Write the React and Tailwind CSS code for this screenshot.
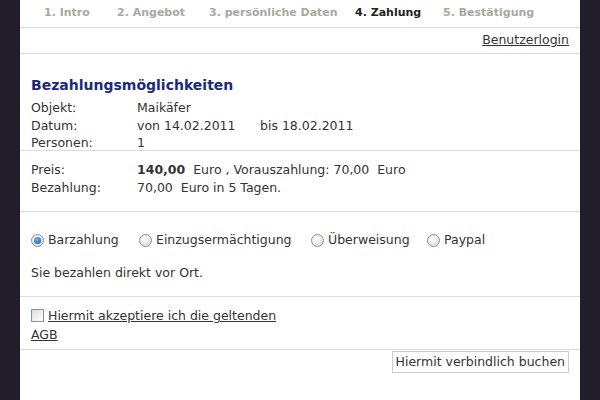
function Radio({ checked, label }) {
  return (
    <label className="flex items-center gap-[4px]">
      <span className="w-[13px] h-[13px] rounded-full border border-[#8f8f8f] bg-[radial-gradient(circle_at_40%_35%,#ffffff,#d4d4d4)] flex items-center justify-center">
        {checked && <span className="w-[7px] h-[7px] rounded-full bg-[radial-gradient(circle_at_40%_35%,#6fb8f0,#0a4f9c)]" />}
      </span>
      <span>{label}</span>
    </label>
  );
}

export default function App() {
  const tabs = [
    { label: '1. Intro', x: 'w-[73px]' },
    { label: '2. Angebot', x: 'w-[92px]' },
    { label: '3. persönliche Daten', x: 'w-[146px]' },
    { label: '4. Zahlung', x: 'w-[88px]', active: true },
    { label: '5. Bestätigung', x: 'w-[110px]' },
  ];

  return (
    <div className="w-[600px] h-[400px] bg-[#221e29] flex overflow-hidden font-['DejaVu_Sans',Verdana,sans-serif] text-[12.5px] text-[#333]">
      <div className="ml-[20px] w-[560px] h-full bg-white flex flex-col">
        {/* Steps */}
        <div className="h-[28px] border-b border-[#dcdcdc] flex items-center pl-[24px] text-[11px] font-bold">
          {tabs.map((t) => (
            <span key={t.label} className={`${t.x} ${t.active ? 'text-[#222]' : 'text-[#aaa89c]'}`}>
              {t.label}
            </span>
          ))}
        </div>

        {/* Login */}
        <div className="h-[26px] border-b border-[#dcdcdc] flex items-center justify-end pr-[11px]">
          <a className="underline text-[#333]">Benutzerlogin</a>
        </div>

        {/* Overview */}
        <div className="px-[11px] pt-[20px] border-b border-[#dcdcdc] h-[97px]">
          <h2 className="text-[14px] font-bold text-[#1b2a78] leading-[22px]">Bezahlungsmöglichkeiten</h2>
          <div className="mt-[3px] grid grid-cols-[106px_1fr] leading-[17.5px]">
            <span>Objekt:</span>
            <span>Maikäfer</span>
            <span>Datum:</span>
            <span className="flex">
              <span className="w-[123px]">von 14.02.2011</span>
              <span>bis 18.02.2011</span>
            </span>
            <span>Personen:</span>
            <span>1</span>
          </div>
        </div>

        {/* Price */}
        <div className="px-[11px] pt-[10px] h-[61px] border-b border-[#dcdcdc] grid grid-cols-[106px_1fr] content-start leading-[18px]">
          <span>Preis:</span>
          <span>
            <b>140,00</b>&nbsp; Euro , Vorauszahlung: 70,00&nbsp; Euro
          </span>
          <span>Bezahlung:</span>
          <span>70,00&nbsp; Euro in 5 Tagen.</span>
        </div>

        {/* Payment method */}
        <div className="px-[11px] pt-[19px] h-[85px] border-b border-[#dcdcdc]">
          <div className="flex items-center h-[18px]">
            <div className="w-[108px]"><Radio checked label="Barzahlung" /></div>
            <div className="w-[172px]"><Radio label="Einzugsermächtigung" /></div>
            <div className="w-[116px]"><Radio label="Überweisung" /></div>
            <Radio label="Paypal" />
          </div>
          <p className="mt-[15px] leading-[18px]">Sie bezahlen direkt vor Ort.</p>
        </div>

        {/* Terms */}
        <div className="px-[11px] pt-[9px] h-[53px] border-b border-[#dcdcdc] leading-[19px]">
          <div className="w-[260px]">
            <span className="inline-block align-[-2px] w-[13px] h-[13px] border border-[#8f8f8f] bg-[linear-gradient(135deg,#dcdcdc,#ffffff)] mr-[4px]" />
            <a className="underline">Hiermit akzeptiere ich die geltenden AGB</a>
          </div>
        </div>

        {/* Submit */}
        <div className="flex justify-end pr-[11px] pt-[1px]">
          <button className="h-[22px] px-[3px] border border-[#cccccc] bg-white text-[#333] text-[12.5px]">
            Hiermit verbindlich buchen
          </button>
        </div>
      </div>
    </div>
  );
}
